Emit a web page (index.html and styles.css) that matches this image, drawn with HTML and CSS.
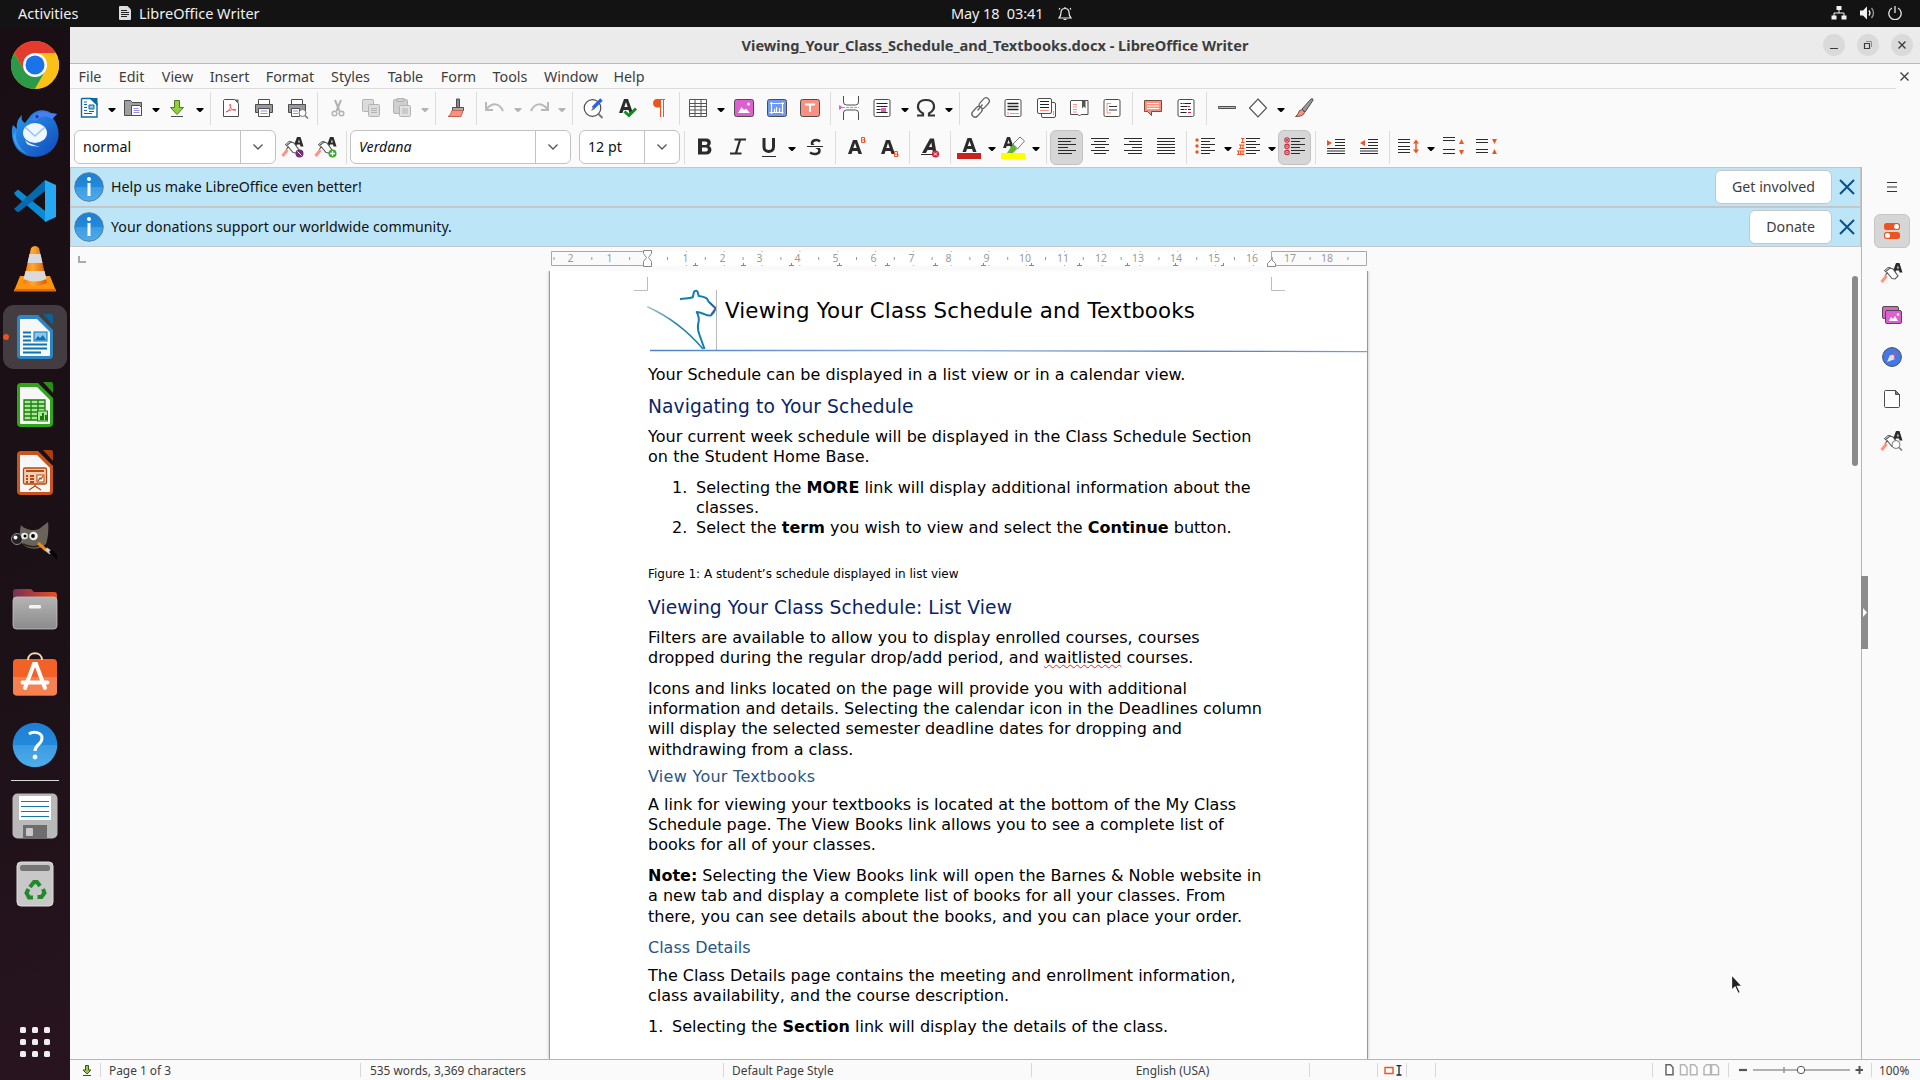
FILE: index.html
```html
<!DOCTYPE html>
<html lang="en">
<head>
<meta charset="utf-8">
<title>Viewing_Your_Class_Schedule_and_Textbooks.docx - LibreOffice Writer</title>
<link rel="stylesheet" href="styles.css">
</head>
<body>
<svg width="0" height="0" class="defs">
  <defs>
    <linearGradient id="gInfo" x1="0" y1="0" x2="0" y2="1"><stop offset="0" stop-color="#1c7fd3"/><stop offset=".5" stop-color="#2389db"/><stop offset=".5" stop-color="#3a9be2"/><stop offset="1" stop-color="#4fadea"/></linearGradient>
    <linearGradient id="gBird" x1="0" y1="0" x2="1" y2="1"><stop offset="0" stop-color="#2a9df4"/><stop offset="1" stop-color="#1148b8"/></linearGradient>
    <linearGradient id="gCone" x1="0" y1="0" x2="1" y2="0"><stop offset="0" stop-color="#f57900"/><stop offset=".4" stop-color="#ffa733"/><stop offset="1" stop-color="#d95b00"/></linearGradient>
    <linearGradient id="gMetal" x1="0" y1="0" x2="0" y2="1"><stop offset="0" stop-color="#b4b4b4"/><stop offset="1" stop-color="#8b8b8b"/></linearGradient>
    <linearGradient id="gFold" x1="0" y1="0" x2="1" y2="0"><stop offset="0" stop-color="#77305a"/><stop offset="1" stop-color="#e9501f"/></linearGradient>
    <linearGradient id="gRule" gradientUnits="userSpaceOnUse" x1="100" y1="0" x2="818" y2="0"><stop offset="0" stop-color="#4f83c4"/><stop offset=".42" stop-color="#8fb0dc"/><stop offset=".75" stop-color="#4a7ab5"/><stop offset="1" stop-color="#7a9fd3"/></linearGradient>
    <linearGradient id="gCat" x1="0" y1="0" x2="1" y2="0"><stop offset="0" stop-color="#a9c9d2"/><stop offset=".5" stop-color="#2b86a8"/><stop offset="1" stop-color="#117fb0"/></linearGradient>
    <symbol id="info" viewBox="0 0 30 30"><circle cx="15" cy="15" r="14.3" fill="url(#gInfo)" stroke="#5d7f9c"/><circle cx="15" cy="7" r="2" fill="#fff"/><rect x="13.5" y="11" width="3" height="13" fill="#fff"/></symbol>
    <symbol id="arr" viewBox="0 0 8 6"><path d="M.5 1h7v1L4.500 5h-1L.5 2z"/></symbol>
    <symbol id="chev" viewBox="0 0 12 8"><path d="M1.500 1.500 6 6l4.500-4.500" fill="none" stroke="#555" stroke-width="1.300"/></symbol>
    <symbol id="brushA" viewBox="0 0 24 24"><path d="M12.500 11.500 16 2h3.500l3 9.500h-3l-.5-2h-3l-1 2z" fill="#2b2b2b"/><path d="m17 7.500 1-3 .8 3z" fill="#fafafa"/><path d="m5 11 5-4 3 1 5 7-3 3-3-.500-5-6-2 4" fill="#fff" stroke="#555" stroke-width="1.100"/><path d="m4 10 4-3.500 3 .500" fill="none" stroke="#555"/><path d="m6.500 15-5 6" stroke="#ff9383" stroke-width="3"/></symbol>
    <symbol id="x" viewBox="0 0 16 16"><path d="m1 1 14 14M15 1 1 15" stroke="#0b4f8a" stroke-width="2" fill="none"/></symbol>
    <symbol id="pg" viewBox="0 0 24 24"><rect x="4" y="3.500" width="16" height="17" rx="1.500" fill="#fff" stroke="#4d4d4d"/></symbol>
  </defs>
</svg>

<header class="topbar">
  <span class="act">Activities</span>
  <svg class="appicon" width="12" height="14" viewBox="0 0 12 14"><path d="M1 0h7.500L12 3.500V13a1 1 0 0 1-1 1H1a1 1 0 0 1-1-1V1a1 1 0 0 1 1-1z" fill="#ddd"/><path d="M2 4.500h6M2 6.500h8M2 8.500h8M2 10.500h6" stroke="#222"/></svg>
  <span class="appname">LibreOffice Writer</span>
  <span class="clock">May 18&nbsp; 03:41</span>
  <svg class="bell" width="14" height="15" viewBox="0 0 14 15"><path d="M1 12h12c-1.500-1.500-2-2.500-2-5.500C11 4 9.500 2.500 7 2.500S3 4 3 6.500C3 9.500 2.500 10.500 1 12zM7 1v1.500M5.500 13.500h3M2 2 1 3.500M12 2l1 1.500" fill="none" stroke="#eee" stroke-width="1.200"/></svg>
  <span class="tray">
    <svg width="16" height="14" viewBox="0 0 16 14"><path d="M5.500 0h5v4h-5zM.5 9.500h5v4h-5zM10.500 9.500h5v4h-5z" fill="#f2f2f2"/><path d="M8 4v3M3 10V7h10v3" fill="none" stroke="#f2f2f2"/></svg>
    <svg width="15" height="14" viewBox="0 0 15 14"><path d="M0 4.500h3L7 .5v13L3 9.500H0z" fill="#f2f2f2"/><path d="M9 4.500q2 2.500 0 5" fill="none" stroke="#f2f2f2" stroke-width="1.300"/><path d="M11.500 2q4 5 0 10" fill="none" stroke="#999" stroke-width="1.300"/></svg>
    <svg width="14" height="14" viewBox="0 0 14 14"><path d="M4 2a6.200 6.200 0 1 0 6 0M7 0v7" fill="none" stroke="#e4e4e4" stroke-width="1.300"/></svg>
  </span>
</header>

<div class="desktop">
<nav class="dock">
  <div class="app"><svg width="48" height="48" viewBox="0 0 48 48"><circle cx="24" cy="24" r="24" fill="#fbc116"/><path d="M3.200 12A24 24 0 0 1 44.800 12H24L13.600 30z" fill="#e33b2e"/><path d="M3.200 12A24 24 0 0 0 24 48L34.400 30 13.600 30z" fill="#2a9a49"/><path d="M24 12H44.800A24 24 0 0 1 24 48L34.400 30z" fill="#fbc116"/><circle cx="24" cy="24" r="12" fill="#fff"/><circle cx="24" cy="24" r="9.500" fill="#1a73e8"/></svg></div>
  <div class="app"><svg width="48" height="48" viewBox="0 -1 48 48"><path d="M11 5c-1 4 0 6 3 8l6-8c5-6 15-6 20-2l6 1-4 4c7 9 8 22 0 31-8 9-24 11-34 2C0 33 0 20 2 15l4 4C5 12 8 8 11 5z" fill="url(#gBird)"/><path d="M20 10c3-8 12-10 18-7l8 1-5 5c-5-3-10-4-16 2z" fill="#4b7cf0"/><path d="M5 20c-2 10 4 20 12 24-8-2-14-9-15-18z" fill="#5cc3ff" opacity=".5"/><ellipse cx="24" cy="23" rx="12" ry="10" fill="#eef6ff"/><path d="m14 17 10 9 10-9" fill="none" stroke="#9cc3f0" stroke-width="1.600"/><path d="M14 30c4 4 10 5 15 7-4-1-8 0-13-3z" fill="#dcebff"/><circle cx="26" cy="6.500" r="1.500" fill="#123a8c"/></svg></div>
  <div class="app"><svg width="42" height="42" viewBox="0 0 42 42"><path d="m0 13 4-3.500L32 32v10L2 16z" fill="#0a8ad2"/><path d="M0 29 31 0v11L4 32.500z" fill="#0569ad"/><path d="M31 0v42l11-5V5z" fill="#27a9f2"/><path d="m31 31-7-5.500L31 42z" fill="#0a8ad2"/></svg></div>
  <div class="app"><svg width="42" height="46" viewBox="0 0 42 46"><path d="M6 30h30l6 15H0z" fill="#ff9410"/><path d="M0 43h42v2.500H0z" fill="#e06a00"/><path d="M17 2q4-4 8 0l8 35q-12 6-24 0z" fill="url(#gCone)"/><path d="M15.500 8h11l2 9h-15zM11.500 25h19l2 8q-11.500 5-23 0z" fill="#dadada"/></svg></div>
  <div class="app active"><svg width="38" height="46" viewBox="0 0 38 46"><path d="M5 1h17l15 15v25a4 4 0 0 1-4 4H5a4 4 0 0 1-4-4V5a4 4 0 0 1 4-4z" fill="#2a87c4"/><path d="M4 5h17l13 13v23q0 1-1 1H5q-1 0-1-1z" fill="#f7f7f7"/><path d="M27 0h8q2 0 2 2v9z" fill="#0d6199"/><path d="M7 18.500h8M7 22.500h8M7 26.500h8M7 30.500h24M7 34.500h24M7 38.500h18" stroke="#0b74b8" stroke-width="2"/><rect x="18" y="18" width="13" height="9" fill="#8fc7e8" stroke="#0b74b8"/><path d="m19 26 3-4 2 2 3-3 3 5z" fill="#0b74b8"/></svg></div>
  <div class="app"><svg width="38" height="46" viewBox="0 0 38 46"><path d="M5 1h17l15 15v25a4 4 0 0 1-4 4H5a4 4 0 0 1-4-4V5a4 4 0 0 1 4-4z" fill="#33a31c"/><path d="M4 5h17l13 13v23q0 1-1 1H5q-1 0-1-1z" fill="#f7f7f7"/><path d="M27 0h8q2 0 2 2v9z" fill="#2b8f16"/><path d="M8 18h21v20H8z" fill="#a6e898"/><path d="M8 18h21v20H8zM8 22h21M8 26h21M8 30h21M8 34h21M15 18v20M22 18v20" fill="none" stroke="#1c7d0c" stroke-width="1.300"/><rect x="21.500" y="29" width="10" height="10" fill="#a6e898" stroke="#1c7d0c"/><path d="M24 38v-4h2v4zM26 38v-7h2v7zM29 38v-5h2v5z" fill="#1c7d0c"/></svg></div>
  <div class="app"><svg width="38" height="46" viewBox="0 0 38 46"><path d="M5 1h17l15 15v25a4 4 0 0 1-4 4H5a4 4 0 0 1-4-4V5a4 4 0 0 1 4-4z" fill="#c9551b"/><path d="M4 5h17l13 13v23q0 1-1 1H5q-1 0-1-1z" fill="#f7f7f7"/><path d="M27 0h8q2 0 2 2v9z" fill="#a8400c"/><rect x="7.500" y="18" width="23" height="16" rx="1.500" fill="#f5cdb4" stroke="#b34a12" stroke-width="1.300"/><path d="M10 21h18M14 26h4M14 29h4M14 32h4M10 26h2M10 29h2M10 32h2" stroke="#b34a12" stroke-width="1.800"/><rect x="21" y="25" width="7" height="7" fill="#fff" stroke="#b34a12"/><path d="m22 31 2-3 1 1 2-3M19 34v2l-6 4M19 36l6 4" fill="none" stroke="#b34a12" stroke-width="1.300"/></svg></div>
  <div class="app"><svg width="48" height="40" viewBox="0 0 48 40"><path d="M10 4c4 5 13 6 18 4l9-7c1 6 0 17-2 22-7 7-20 6-25-2-2-5-1-13 0-17z" fill="#69635a"/><path d="M12 23q10 5 17 1" fill="none" stroke="#2b2620" stroke-width="1.500"/><circle cx="6" cy="18" r="5.500" fill="#222" stroke="#8b8b8b"/><circle cx="4.500" cy="16.500" r="2" fill="#fff"/><circle cx="13.500" cy="15" r="3.300" fill="#eee"/><circle cx="22.500" cy="15" r="4.300" fill="#eee"/><circle cx="14" cy="15" r="1.500"/><circle cx="22" cy="15" r="1.900"/><path d="m27 22 8 7" stroke="#e98a1d" stroke-width="3"/><path d="m35 28 5 4" stroke="#cfcfcf" stroke-width="4"/><path d="m38 31 8 8v-5q-4-5-6-5z" fill="#050505"/></svg></div>
  <div class="app"><svg width="46" height="42" viewBox="0 0 46 42"><path d="M1 20V4q0-3 3-3h15l3 3h20q3 0 3 3v13z" fill="url(#gFold)"/><rect x="1" y="9" width="44" height="32" rx="3.500" fill="url(#gMetal)" stroke="#c4c4c4" stroke-width=".8"/><rect x="17" y="17" width="12" height="3.500" rx="1.200" fill="#f4f4f4"/></svg></div>
  <div class="app"><svg class="bag" width="46" height="46" viewBox="0 3 46 46"><rect x="1" y="8" width="44" height="36.500" rx="4" fill="#f26226"/><path d="M1 26h44v14.500q0 4-4 4H5q-4 0-4-4z" fill="#f58150"/><path d="M16 9c0-9 14-9 14 0" fill="none" stroke="#f8d9b0" stroke-width="2"/><path d="m13 37 9-24h2l9 24M10.500 31.500h25" fill="none" stroke="#fff" stroke-width="4" stroke-linecap="round"/></svg></div>
  <div class="app"><svg width="46" height="46" viewBox="0 0 46 46"><circle cx="23" cy="23" r="22.300" fill="url(#gInfo)"/><path d="M17 12c4-3 13-2 13 4 0 7-7 6-7 13" fill="none" stroke="#fff" stroke-width="3"/><circle cx="23" cy="35" r="2.400" fill="#fff"/></svg></div>
  <div class="dsep"></div>
  <div class="app drive"><svg width="46" height="46" viewBox="0 0 46 46"><rect x=".5" y=".5" width="45" height="45" rx="5" fill="#b9b9b9"/><path d="M7 3h32v24H7z" fill="#fff"/><path d="M9 8.500h28M9 13.500h28M9 18.500h28M9 23.500h28" stroke="#157aa5"/><path d="M11 32h24v13.500H11z" fill="#6d6d6d"/><rect x="14" y="35" width="7" height="8" rx="1" fill="#c9c9c9"/></svg></div>
  <div class="app"><svg width="38" height="46" viewBox="0 0 38 46"><rect x="1" y="1" width="36" height="44" rx="4" fill="#c8c8c8" stroke="#dedede"/><rect x="4" y="4" width="30" height="6" rx="2.500" fill="#757575"/><g fill="none" stroke="#1f8a2a" stroke-width="4"><path d="m14 26 4-5h3l3 4M27 28l1.500 4-3 4h-4M17 36.500h-4L10.500 32l2-4"/></g></svg></div>
  <div class="grid"><svg width="31" height="31" viewBox="0 0 31 31" fill="#eee"><rect width="6" height="6" rx="1.500"/><rect x="12" width="6" height="6" rx="1.500"/><rect x="24" width="6" height="6" rx="1.500"/><rect y="12" width="6" height="6" rx="1.500"/><rect x="12" y="12" width="6" height="6" rx="1.500"/><rect x="24" y="12" width="6" height="6" rx="1.500"/><rect y="24" width="6" height="6" rx="1.500"/><rect x="12" y="24" width="6" height="6" rx="1.500"/><rect x="24" y="24" width="6" height="6" rx="1.500"/></svg></div>
</nav>

<main class="window">
  <div class="titlebar">
    <h1>Viewing_Your_Class_Schedule_and_Textbooks.docx - LibreOffice Writer</h1>
    <div class="wbtns">
      <span><svg width="10" height="10"><path d="M1 8.500h8" stroke="#3d3d3d"/></svg></span>
      <span><svg width="10" height="10"><path d="M1.500 3.500h5v5h-5z" fill="none" stroke="#3d3d3d" stroke-width="1.200"/><path d="M3 1.500h5.500V7" fill="none" stroke="#8d8d8d"/></svg></span>
      <span><svg width="10" height="10"><path d="m1.500 1.500 7 7m0-7-7 7" stroke="#3d3d3d" stroke-width="1.400"/></svg></span>
    </div>
  </div>
  <div class="menubar">
    <div class="menus"><span>File</span><span>Edit</span><span>View</span><span>Insert</span><span>Format</span><span>Styles</span><span>Table</span><span>Form</span><span>Tools</span><span>Window</span><span>Help</span></div>
    <svg class="docclose" width="9" height="9"><path d="m.5.5 8 8m0-8-8 8" stroke="#3d3d3d" stroke-width="1.300"/></svg>
  </div>

  <div class="toolbar t1">
    <div class="sp"><svg viewBox="0 0 24 24"><path d="M5.500 2.500H15L20 7.500V21H4.500V3z" fill="#fff" stroke="#0b6aa2" stroke-width="1.400"/><path d="M12 2h8.500v8z" fill="#0b6aa2"/><path d="M7 8.500h3M7 11.500h3M7 14.500h3M7 17.500h8M7 6h3" stroke="#0b6aa2"/><path d="M12 9h5v4h-5z" fill="#8fc7e8" stroke="#0b6aa2"/><path d="M12 15.500h5" stroke="#0b6aa2"/></svg><svg class="a"><use href="#arr"/></svg></div>
    <div class="sp"><svg viewBox="0 0 24 24"><path d="M3.500 19.500v-15h6l2 2h9v13z" fill="#a0a0a0" stroke="#4d4d4d"/><path d="M10.500 9.500h8l2 2v8h-10z" fill="#fff" stroke="#4d4d4d"/><path d="M12.500 12.500h5M12.500 14.500h6M12.500 16.500h6" stroke="#9a8fe0"/></svg><svg class="a"><use href="#arr"/></svg></div>
    <div class="sp"><svg viewBox="0 0 24 24"><path d="M9.500 4.500h5v7h4L12 18.500 5.500 11.500h4z" fill="#92cf3d" stroke="#4f7a22"/><path d="M6 20.500h12" stroke="#4d4d4d"/></svg><svg class="a"><use href="#arr"/></svg></div>
    <i></i>
    <div><svg viewBox="0 0 24 24"><path d="M5.500 3.500h10l4 4v13h-15v-16z" fill="#fff" stroke="#4d4d4d"/><path d="M15 3.500h4.500V8z" fill="#666"/><path d="M7 16c6-3 5-8 4-8s1 8 6 6c-2-2-7 1-10 2z" fill="none" stroke="#e05a6b"/></svg></div>
    <div><svg viewBox="0 0 24 24"><path d="M6.500 9V3.500h11V9" fill="#fff" stroke="#4d4d4d"/><path d="M3.500 8.500h17v8h-17z" fill="#999" stroke="#4d4d4d"/><path d="M6.500 12.500h11v8h-11z" fill="#fff" stroke="#4d4d4d"/><path d="M8.500 15h7M8.500 17.500h7" stroke="#9a8fe0"/></svg></div>
    <div><svg viewBox="0 0 24 24"><path d="M6.500 9V3.500h11V9" fill="#fff" stroke="#4d4d4d"/><path d="M3.500 8.500h17v8h-17z" fill="#999" stroke="#4d4d4d"/><path d="M6.500 12.500h8v8h-8z" fill="#fff" stroke="#4d4d4d"/><path d="M8 15h5M8 17.500h5" stroke="#9a8fe0"/><circle cx="17.500" cy="17" r="3.500" fill="#fff" stroke="#777"/><path d="m20 19.500 3 3" stroke="#777" stroke-width="1.600"/></svg></div>
    <i></i>
    <div><svg viewBox="0 0 24 24" fill="none" stroke="#b3b3b3" stroke-width="1.500"><path d="m9 4 4.500 11M15 4l-4.500 11" stroke-width="2"/><circle cx="8.500" cy="17.500" r="2.300"/><circle cx="15.500" cy="17.500" r="2.300"/></svg></div>
    <div><svg viewBox="0 0 24 24" fill="#dcdcdc" stroke="#b3b3b3"><rect x="3.500" y="3.500" width="11" height="12" rx="1"/><rect x="9.500" y="8.500" width="11" height="12" rx="1"/><path d="M12 12.500h6M12 14.500h6M12 16.500h6"/></svg></div>
    <div class="sp"><svg viewBox="0 0 24 24" fill="#d0d0d0" stroke="#b3b3b3"><rect x="3.500" y="3.500" width="14" height="14" rx="1.500"/><path d="M7 2.500h7v3H7z"/><rect x="9.500" y="9.500" width="11" height="11" rx="1" fill="#e2e2e2"/><path d="M12 13h6M12 15h6M12 17h6"/></svg><svg class="a dim"><use href="#arr"/></svg></div>
    <i></i>
    <div><svg viewBox="0 0 24 24"><path d="M12.500 3h3v9h-3z" fill="#888" stroke="#4d4d4d"/><path d="M8.500 11.500h11v3h-11z" fill="#aaa" stroke="#4d4d4d"/><path d="M8 14.500h11l-2 6H4q3-1 4-6z" fill="#fa9080" stroke="#c4604f"/></svg></div>
    <i></i>
    <div class="sp"><svg viewBox="0 0 24 24" fill="none" stroke="#b9b9b9" stroke-width="2"><path d="M3 6v8h7M3.500 13C9 7 16 6 20 15"/></svg><svg class="a dim"><use href="#arr"/></svg></div>
    <div class="sp"><svg viewBox="0 0 24 24" fill="none" stroke="#b9b9b9" stroke-width="2"><path d="M21 6v8h-7M20.500 13C15 7 8 6 4 15"/></svg><svg class="a dim"><use href="#arr"/></svg></div>
    <i></i>
    <div><svg viewBox="0 0 24 24"><circle cx="11.500" cy="12" r="8.300" fill="#fff" stroke="#4d4d4d" stroke-width="1.200"/><path d="m17.500 18 4 4" stroke="#777" stroke-width="2"/><path d="m12 12 8.500-8.500" stroke="#2e63d8" stroke-width="3.300"/><path d="m10 15 2-4 2 2z" fill="#7a7a7a"/></svg></div>
    <div><svg viewBox="-1 0 24 24"><path fill-rule="evenodd" d="m4 17 5-14h4l5 14h-3.500l-1-3h-5l-1 3zm5.300-6h3.400L11 6z" fill="#2b2b2b"/><path d="m9.500 15.500 4.500 4 7-7" fill="none" stroke="#118a24" stroke-width="3"/></svg></div>
    <div><svg viewBox="2 0 24 24"><path d="M12 3h8v1h-1v17h-1V4h-2v17h-1v-9.500h-3C9.500 11.500 8 9.500 8 7.300S9.500 3 12 3z" fill="#ec5422"/></svg></div>
    <i></i>
    <div class="sp"><svg viewBox="0 0 24 24"><path d="M3.500 3.500h17v17h-17z" fill="#fff"/><path d="M3.500 3.500h17v17h-17zM3.500 7.500h17M3.500 10.500h17M3.500 14h17M3.500 17.500h17M9 3.500v17M15 3.500v17" fill="none" stroke="#555"/></svg><svg class="a"><use href="#arr"/></svg></div>
    <div><svg viewBox="0 0 24 24"><rect x="2.500" y="3.500" width="19" height="17" rx="2" fill="#dd60cf" stroke="#4d4d4d"/><path d="m6 17 3.500-6 2.500 3 2-1.500L18 17z" fill="#fff"/><circle cx="16.500" cy="8" r="1.500" fill="#fff"/></svg></div>
    <div><svg viewBox="0 0 24 24"><rect x="2.500" y="3.500" width="19" height="17" rx="2" fill="#7099f0" stroke="#4d4d4d"/><path d="M5 7.500h14M6.500 6v12M4.500 16.500h14M17.500 6v12M9.500 16v-3M11.500 16v-5M14.500 16v-4" stroke="#fff" stroke-width="1.200"/></svg></div>
    <div><svg viewBox="0 0 24 24"><rect x="2.500" y="3.500" width="19" height="17" rx="2" fill="#fa9080" stroke="#4d4d4d"/><path d="M7 8.500h10M12 8v8" stroke="#fff" stroke-width="2"/></svg></div>
    <i></i>
    <div><svg viewBox="0 0 24 24"><path d="M4.500 0v6q0 3 3 3h9q3 0 3-3V0M4.500 24v-7q0-3 3-3h9q3 0 3 3v7" fill="#fff" stroke="#4d4d4d"/><path d="M3 11.500h17" stroke="#e57bd9" stroke-dasharray="3 1"/><path d="m0 9 4 2.500L0 14z" fill="#dd60cf"/></svg></div>
    <div class="sp"><svg viewBox="0 0 24 24"><use href="#pg"/><path d="M6.500 7.500h11M6.500 10.500h11M6.500 13.500h4M6.500 16.500h11" stroke="#222"/><path d="M11 12h5v4h-5z" fill="#dd60cf"/></svg><svg class="a"><use href="#arr"/></svg></div>
    <div class="sp"><svg viewBox="0 0 24 24"><path d="M3 19.500h6v-2C1 13 3 4 12 4s11 9 3 13.500v2h6" fill="none" stroke="#333" stroke-width="2.200"/></svg><svg class="a"><use href="#arr"/></svg></div>
    <i></i>
    <div><svg viewBox="0 0 24 24" fill="#fff" stroke="#666" stroke-width="1.300"><rect x="10" y="4" width="12" height="6.500" rx="3.200" transform="rotate(-48 16 7)"/><rect x="3" y="13" width="12" height="6.500" rx="3.200" transform="rotate(-48 8.500 16)"/><path d="m9.500 14.500 5-6"/></svg></div>
    <div><svg viewBox="0 0 24 24"><use href="#pg"/><path d="M6.500 7.500h11M6.500 10.500h11M6.500 13.500h11" stroke="#222" stroke-width="1.300"/><path d="M7 16v3M9 17.500h9" stroke="#fa9080"/></svg></div>
    <div><svg viewBox="0 0 24 24"><rect x="7.500" y="6.500" width="14" height="15" rx="1.500" fill="#fff" stroke="#4d4d4d"/><rect x="3.500" y="2.500" width="14" height="15" rx="1.500" fill="#fff" stroke="#4d4d4d"/><path d="M6 5.500h9M6 8.500h9M6 11.500h9" stroke="#222" stroke-width="1.200"/><path d="M6 14.500h9M19.500 15v4" stroke="#fa9080"/></svg></div>
    <div><svg viewBox="0 0 24 24"><path d="M4 4.500h17v14h-7l-1.500 1.500L11 18.500H3.500V5z" fill="#fff" stroke="#4d4d4d"/><path d="M15 4.500h3.500v8l-1.700-2-1.800 2z" fill="#555"/><path d="M6 8.500h4M6 11h4M6 13.500h4M6 16h4" stroke="#fa9080"/></svg></div>
    <div><svg viewBox="0 0 24 24"><use href="#pg"/><path d="M7 7.500h4M7 7v10M7 17h4" stroke="#fa9080" fill="none"/><path d="M9 10.500h8M9 14h8" stroke="#333"/></svg></div>
    <i></i>
    <div><svg viewBox="0 0 24 24"><path d="M3.500 4.500h17v11h-10v4l-4-4h-3z" fill="#fa9080" stroke="#7a4a40"/><path d="M6 7.500h12M6 10h12M6 12.500h12" stroke="#fff"/></svg></div>
    <div><svg viewBox="0 0 24 24"><use href="#pg"/><path d="M6.500 7.500h2M10 7.500h7M6.500 10.500h7M6.500 13.500h4M14 13.500h3M6.500 16.500h6" stroke="#222"/><path d="M9 7.500h2M14 10.500h2M11 13.500h2M14 16.500h3" stroke="#d0243c"/></svg></div>
    <i></i>
    <div><svg viewBox="0 0 24 24"><path d="M3.500 10.500h17v2h-17z" fill="#bbb" stroke="#4d4d4d"/></svg></div>
    <div class="sp"><svg viewBox="0 0 24 24"><path d="m12 3 8.500 9-8.500 9L3.500 12z" fill="#fff" stroke="#555" stroke-width="1.200"/></svg><svg class="a"><use href="#arr"/></svg></div>
    <div><svg viewBox="0 0 24 24"><path d="m10 13 9-10q3-1 1.500 2L13 16z" fill="#999" stroke="#4d4d4d"/><path d="M3.500 20.500q3-2 4-6l3-1 2 3q-1 4-9 4z" fill="#fa9080" stroke="#7a4a40"/></svg></div>
  </div>

  <div class="toolbar t2">
    <div class="combo c1"><span>normal</span><b><svg width="12" height="8"><use href="#chev"/></svg></b></div>
    <div class="fx"><svg viewBox="0 0 24 24"><use href="#brushA"/><circle cx="18.500" cy="18.500" r="4" fill="#7b2a7d"/><path d="m16.500 16.500 4 4" stroke="#fff"/></svg></div>
    <div class="fx"><svg viewBox="0 0 24 24"><use href="#brushA"/><circle cx="18.500" cy="18.500" r="4" fill="#3fa52a"/><path d="M16 18.500h5M18.500 16v5" stroke="#fff" stroke-width="1.300"/></svg></div>
    <i></i>
    <div class="combo c2"><span><em>Verdana</em></span><b><svg width="12" height="8"><use href="#chev"/></svg></b></div>
    <div class="combo c3"><span>12 pt</span><b><svg width="12" height="8"><use href="#chev"/></svg></b></div>
    <i></i>
    <div><svg viewBox="0 0 24 24"><path fill-rule="evenodd" d="M5 3.500h8.500c5 0 5.500 6 2.500 7.500 4 1.500 3 8.500-2.500 8.500H5zm4 3v3.500h3.500c2.500 0 2.500-3.500 0-3.500zm0 6v4h4c2.500 0 2.500-4 0-4z" fill="#2b2b2b"/></svg></div>
    <div><svg viewBox="0 0 24 24"><path d="M8.500 4.500H20M4 18.500h11.500M14 5l-4 13" stroke="#2b2b2b" stroke-width="2.200"/></svg></div>
    <div class="sp"><svg viewBox="0 0 24 24"><path d="M7 3v9c0 6 9.500 6 9.500 0V3" fill="none" stroke="#2b2b2b" stroke-width="3"/><path d="M5 21.500h14" stroke="#2b2b2b"/></svg><svg class="a"><use href="#arr"/></svg></div>
    <div><svg viewBox="0 0 24 24"><path d="M17 6.500c-3-2.500-8-1.500-8 2 0 4 7.500 2.500 7.500 7 0 4-6 4.500-9.500 2" fill="none" stroke="#2b2b2b" stroke-width="2.500"/><path d="M4 11.500h16" stroke="#fafafa" stroke-width="3"/><path d="M4 11.500h16" stroke="#2b2b2b"/></svg></div>
    <i></i>
    <div><svg viewBox="0 0 24 24"><path fill-rule="evenodd" d="M4 19 9 5h4l5 14h-3.500l-1-3h-5l-1 3zm5.300-6h3.400L11 8z" fill="#2b2b2b"/><path d="M17.500 2.500h3v5h-3zM17.500 5h3.500v2.500" fill="none" stroke="#ec5422"/></svg></div>
    <div><svg viewBox="0 0 24 24"><path fill-rule="evenodd" d="M4 19 9 5h4l5 14h-3.500l-1-3h-5l-1 3zm5.300-6h3.400L11 8z" fill="#2b2b2b"/><path d="M17.500 16.500h3v5h-3zM17.500 19h3.500v2.500" fill="none" stroke="#ec5422"/></svg></div>
    <i></i>
    <div><svg viewBox="0 0 24 24"><path fill-rule="evenodd" d="m4 18 8-14.500h4L18.500 18H15l-.5-3h-5L8 18zm7-6h3l-.6-4.500z" fill="#2b2b2b"/><path d="M3 19.500h12" stroke="#2b2b2b"/><circle cx="17.500" cy="19" r="3.600" fill="#d0243c"/><path d="m16 17.500 3 3m0-3-3 3" stroke="#fff"/></svg></div>
    <i></i>
    <div class="sp"><svg viewBox="0 0 24 24"><path fill-rule="evenodd" d="m5.500 17 5-14h4l5 14H16l-1-3h-5l-1 3zm5.300-6h3.400l-1.700-5z" fill="#2b2b2b"/><path d="M0 18h24v6H0z" fill="#c9211e"/></svg><svg class="a"><use href="#arr"/></svg></div>
    <div class="sp"><svg viewBox="0 0 24 24"><path fill-rule="evenodd" d="M2 13 6 2h3l4 11h-3l-.700-2H5.700L5 13zm4.300-4.500h2.500L7.500 5z" fill="#2b2b2b"/><path d="m12 9 7-7 4.500 4-7 8z" fill="#fff" stroke="#777"/><path d="m12 9 4 5-4 4H6z" fill="#5fb62c"/><path d="M0 18h24v6H0z" fill="#ffff00"/></svg><svg class="a"><use href="#arr"/></svg></div>
    <i></i>
    <div class="on"><svg viewBox="0 0 24 24" class="ln"><path d="M3 3.500h18M3 6.500h13M3 9.500h18M3 12.500h10M3 15.500h18M3 18.500h14"/></svg></div>
    <div><svg viewBox="0 0 24 24" class="ln"><path d="M3 3.500h18M6 6.500h12M3 9.500h18M7 12.500h10M3 15.500h18M6 18.500h12"/></svg></div>
    <div><svg viewBox="0 0 24 24" class="ln"><path d="M3 3.500h18M8 6.500h13M3 9.500h18M11 12.500h10M3 15.500h18M7 18.500h14"/></svg></div>
    <div><svg viewBox="0 0 24 24" class="ln"><path d="M3 3.500h18M3 6.500h18M3 9.500h18M3 12.500h18M3 15.500h18M3 18.500h18"/></svg></div>
    <i></i>
    <div class="sp"><svg viewBox="0 0 24 24" class="ln"><path d="M8 3.500h14M8 6.500h9M8 9.500h14M8 12.500h9M8 15.500h14M8 18.500h9"/><g fill="#ec5422" stroke="none"><circle cx="4" cy="5" r="1.700"/><circle cx="4" cy="11" r="1.700"/><circle cx="4" cy="17" r="1.700"/></g></svg><svg class="a"><use href="#arr"/></svg></div>
    <div class="sp"><svg viewBox="0 0 24 24" class="ln"><path d="M9 3.500h14M9 6.500h10M9 9.500h14M9 12.500h10M9 15.500h14M9 18.500h10"/><path d="M4 3.500h3.500M5.700 3.500v4M4 7.500h3.500M2 10h5.500M3.700 10v3M6 10v3M2 13.500h5.500M0 16h7.500M1.500 16v3M3.700 16v3M6 16v3M0 19.500h7.500" stroke="#ec5422"/></svg><svg class="a"><use href="#arr"/></svg></div>
    <div class="on"><svg viewBox="0 0 24 24" class="ln"><path d="M8 3.500h14M8 6.500h9M8 9.500h14M8 12.500h9M8 15.500h14M8 18.500h9"/><g fill="none" stroke="#d0243c"><circle cx="4" cy="5" r="2.200"/><circle cx="4" cy="11.300" r="2.200"/><circle cx="4" cy="17.600" r="2.200"/><path d="m3 4 2 2M5 4 3 6M3 10.300l2 2m0-2-2 2M3 16.600l2 2m0-2-2 2" stroke-width=".8"/></g></svg></div>
    <i></i>
    <div><svg viewBox="0 0 24 24" class="ln"><path d="M11 4.500h10M11 7.500h10M11 10.500h10M3 13.500h18M3 16h18M3 18.500h18"/><path d="m3 5 5 3-5 3z" fill="#ec5422" stroke="none"/></svg></div>
    <div><svg viewBox="0 0 24 24" class="ln"><path d="M11 4.500h10M11 7.500h10M11 10.500h10M3 13.500h18M3 16h18M3 18.500h18"/><path d="M8 5 3 8l5 3z" fill="#ec5422" stroke="none"/></svg></div>
    <i></i>
    <div class="sp"><svg viewBox="0 0 24 24" class="ln"><path d="M2 4.500h12M2 7.500h12M2 11.500h12M2 14.500h12M2 17.500h12"/><path d="M20 7v9" stroke="#ec5422" stroke-width="1.500"/><path d="m20 4.500 3 4h-6zM20 18.500l3-4h-6z" fill="#ec5422" stroke="none"/></svg><svg class="a"><use href="#arr"/></svg></div>
    <div><svg viewBox="0 0 24 24" class="ln"><path d="M1 2.500h12M1 5.500h12M1 14.500h12M1 18.500h12"/><path d="m19.500 4 2.500 5h-5zM19.500 20l2.500-5h-5z" fill="#ec5422" stroke="none"/></svg></div>
    <div><svg viewBox="0 0 24 24" class="ln"><path d="M1 4.500h12M1 7.500h12M1 14.500h12M1 17.500h12"/><path d="m19.500 9 2.500-5h-5zM19.500 14l2.500 5h-5z" fill="#ec5422" stroke="none"/></svg></div>
  </div>

  <div class="work">
    <section class="left">
      <div class="info"><svg width="30" height="30"><use href="#info"/></svg><span>Help us make LibreOffice even better!</span><button>Get involved</button><svg width="16" height="16"><use href="#x"/></svg></div>
      <div class="info second"><svg width="30" height="30"><use href="#info"/></svg><span>Your donations support our worldwide community.</span><button>Donate</button><svg width="16" height="16"><use href="#x"/></svg></div>
      <div class="rulerrow">
        <svg class="corner" width="8" height="7"><path d="M1 0v6h7" fill="none" stroke="#aaa" stroke-width="2"/></svg>
        <svg class="ruler" width="818" height="24" viewBox="0 0 818 24">
          <path d="M98 4h623v15H98z" fill="#fff"/>
          <path d="M97 4.500H.5v14H97M720.500 4.500h95v14h-95z" fill="none" stroke="#a8a8a8"/>
          <path d="M2.500 11.500h95" stroke="#999" stroke-width="3" stroke-dasharray="1 36.800"/>
          <path d="M116 11.500h700" stroke="#999" stroke-width="3" stroke-dasharray="1 36.800"/>
          <path d="M135 4.500h590M135 18.500h590" stroke="#aaa" stroke-dasharray="1 36.800"/>
          <path d="M144.500 16v3m48-3v3m48-3v3m48-3v3m48-3v3m48-3v3m48-3v3m48-3v3m48-3v3m48-3v3m48-3v3m48-3v3" stroke="#888"/>
          <path d="M142 18.500h530" stroke="#888" stroke-dasharray="5 43"/>
          <path d="M92.500 3.500h8v3l-3 4 3 4v5h-8v-5l3-4-3-4z" fill="#fff" stroke="#888"/>
          <path d="M716.500 19.500v-3l4-4 4 4v3z" fill="#fff" stroke="#888"/>
          <g class="nums"><text x="19.500" y="15">2</text><text x="58.500" y="15">1</text><text x="134.500" y="15">1</text><text x="171.500" y="15">2</text><text x="208.500" y="15">3</text><text x="246.500" y="15">4</text><text x="284.500" y="15">5</text><text x="322.500" y="15">6</text><text x="360.500" y="15">7</text><text x="397.500" y="15">8</text><text x="435.500" y="15">9</text><text x="474" y="15">10</text><text x="512" y="15">11</text><text x="550" y="15">12</text><text x="587" y="15">13</text><text x="625" y="15">14</text><text x="663" y="15">15</text><text x="701" y="15">16</text><text x="739" y="15">17</text><text x="776" y="15">18</text></g>
        </svg>
      </div>
      <div class="canvas">
        <article class="page">
          <div class="phead">
            <svg class="logo" width="818" height="82" viewBox="0 0 818 82">
              <path d="M84 19.500h13.500V6M721.500 6v13.500H735" fill="none" stroke="#bdbdbd"/>
              <path d="M97.300 35.700C118 45 137 59 153 78" fill="none" stroke="url(#gCat)" stroke-width="1.500"/>
              <path d="M130 28.300c4-1 9-.5 12.700-2 .8-2 .5-5 2-6.200 3-1.500 3.300 2 4 5 3 .4 6 1 8 2.200 1 1.500 1.500 3 2.500 4l6.500 6-2 4-2.700 3c-3 .7-5-.5-7-1.300-2.500-1-5.500-2-7.300-2 2 4 2.500 6 2 9-1 5-1.500 8 1 14.500l4.800 13.500" fill="none" stroke="#137dad" stroke-width="2" stroke-linejoin="round"/>
              <path d="m159.500 31.300 6.200 6-4.700 6.500" fill="none" stroke="#46609f" stroke-width="1.700"/>
              <path d="M166.500 19v60" stroke="#b8b8b8"/>
              <path d="M100 79.500h260l458 1.200" fill="none" stroke="url(#gRule)" stroke-width="1.300"/>
            </svg>
            <h2>Viewing Your Class Schedule and Textbooks</h2>
          </div>
          <p class="m1 wide">Your Schedule can be displayed in a list view or in a calendar view.</p>
          <h3 class="m2">Navigating to Your Schedule</h3>
          <p class="m3 wide">Your current week schedule will be displayed in the Class Schedule Section<br>on the Student Home Base.</p>
          <ol class="m4">
            <li><span>1.</span><div>Selecting the <strong>MORE</strong> link will display additional information about the<br>classes.</div></li>
            <li><span>2.</span><div>Select the <strong>term</strong> you wish to view and select the <strong>Continue</strong> button.</div></li>
          </ol>
          <p class="caption">Figure 1: A student’s schedule displayed in list view</p>
          <h3 class="m5">Viewing Your Class Schedule: List View</h3>
          <p class="m6 filters">Filters are available to allow you to display enrolled courses, courses<br>dropped during the regular drop/add period, and <u>waitlisted</u> courses.</p>
          <p class="m7">Icons and links located on the page will provide you with additional<br>information and details. Selecting the calendar icon in the Deadlines column<br>will display the selected semester deadline dates for dropping and<br>withdrawing from a class.</p>
          <h4 class="m8">View Your Textbooks</h4>
          <p class="m9">A link for viewing your textbooks is located at the bottom of the My Class<br>Schedule page. The View Books link allows you to see a complete list of<br>books for all of your classes.</p>
          <p class="m4"><strong>Note:</strong> Selecting the View Books link will open the Barnes &amp; Noble website in<br>a new tab and display a complete list of books for all your classes. From<br><span class="wide">there, you can see details about the books, and you can place your order.</span></p>
          <h4 class="m7">Class Details</h4>
          <p class="m6">The Class Details page contains the meeting and enrollment information,<br>class availability, and the course description.</p>
          <ol class="m4 flat"><li><span>1.</span><div>Selecting the <strong>Section</strong> link will display the details of the class.</div></li></ol>
        </article>
        <div class="scroll"></div>
      </div>
    </section>
    <aside class="deck">
      <div class="handle"><svg width="7" height="73"><path d="m2 32 4 4.500L2 41z" fill="#fff"/></svg></div>
      <div class="tab menu"><svg width="10" height="10"><path d="M0 .5h10M0 5h10M0 9.500h10" stroke="#333"/></svg></div>
      <div class="tab sel"><svg width="16" height="16" viewBox="0 0 16 16"><rect width="16" height="7" rx="2.500" fill="#ec5422"/><rect y="9" width="16" height="7" rx="2.500" fill="#ec5422"/><circle cx="12.500" cy="3.500" r="2.500" fill="#fff"/><circle cx="3.500" cy="12.500" r="2.500" fill="#fff"/></svg></div>
      <div class="tab"><svg width="24" height="24"><use href="#brushA"/></svg></div>
      <div class="tab"><svg width="24" height="24" viewBox="0 0 24 24"><rect x="2.500" y="3.500" width="16" height="12" rx="1.500" fill="#dd60cf" stroke="#4d4d4d"/><rect x="5.500" y="7.500" width="16" height="13" rx="1.500" fill="#dd60cf" stroke="#4d4d4d"/><path d="m9 18 2-4 2 2 2-3 3 5z" fill="#fff"/><circle cx="18" cy="11.500" r="1.200" fill="#fff"/></svg></div>
      <div class="tab"><svg width="24" height="24" viewBox="0 0 24 24"><circle cx="12" cy="12" r="9.400" fill="#4478ea" stroke="#4d4d4d"/><path d="m7 17 3-7 5 4z" fill="#e8e8f0"/><path d="m17 7-7 3.500L13.500 14z" fill="#d95468"/><circle cx="12" cy="12" r="2.300" fill="#dcdce6"/></svg></div>
      <div class="tab"><svg width="24" height="24" viewBox="0 0 24 24"><path d="M5.500 3.500h10l4 4v12q0 1-1 1h-13q-1 0-1-1v-15q0-1 1-1z" fill="#fff" stroke="#4d4d4d"/><path d="M15.500 3.500v4h4z" fill="#777" stroke="#4d4d4d"/></svg></div>
      <div class="tab"><svg width="24" height="24" viewBox="0 0 24 24"><use href="#brushA"/><circle cx="16" cy="15.500" r="4" fill="#fff" stroke="#777"/><path d="m19 18.500 3 3" stroke="#777" stroke-width="1.600"/></svg></div>
    </aside>
  </div>

  <footer class="status">
    <span class="ctr save"><svg width="10" height="11" viewBox="0 0 10 11"><path d="M3.500.5h3V5H9L5 9 1 5h2.500z" fill="#92cf3d" stroke="#444"/><path d="M1 10.500h8" stroke="#444"/></svg></span>
    <span>Page 1 of 3</span>
    <span class="words">535 words, 3,369 characters</span>
    <span>Default Page Style</span>
    <span class="ctr lang">English (USA)</span>
    <span></span>
    <span class="ctr nudge"><svg width="19" height="11" viewBox="0 0 19 11"><path d="M1 2.500h8v6H1z" fill="none" stroke="#ec5422" stroke-width="1.400"/><path d="M12.500.5h5M15 .5v9M12.500 10h5" stroke="#222" stroke-width="1.300"/></svg></span>
    <span></span>
    <span></span>
    <span class="ctr nudge"><svg width="55" height="12" viewBox="0 0 55 12" fill="#fff" stroke-width="1.500"><path d="M1 .8h4.500L8 3.500v7.200H1z" stroke="#666"/><path d="M15.500.8h4L22 3.500v7.200h-6.500zM25.500.8h4L32 3.500v7.200h-6.500zM45.500 10.700h-6.500V3.500L41.500.8h4zM46.500.8h4.500L53.500 3.500v7.200h-7z" stroke="#b5b5b5"/></svg></span>
    <span class="ctr"><svg width="126" height="12" viewBox="0 0 126 12"><path d="M2 6h8" stroke="#555" stroke-width="2.200"/><path d="M16 6h97" stroke="#999" stroke-width="1.600"/><path d="M47 3v6" stroke="#999" stroke-width="1.600"/><circle cx="64" cy="6" r="3.700" fill="#fff" stroke="#555"/><path d="M119.500 6h8M123.500 2v8" transform="translate(-1 0)" stroke="#555" stroke-width="2"/></svg></span>
    <span class="zoom">100%</span>
  </footer>
</main>
</div>
<svg class="cursor" width="14" height="22" viewBox="0 0 14 22"><path d="M1.500 1.500v16l3.500-3.500 3 6.500 2.500-1-3-6h5z" fill="#222" stroke="#fff" stroke-width="1.300"/></svg>
</body>
</html>
```
FILE: styles.css
```css
* { box-sizing: border-box; }
body { margin: 0; width: 1920px; height: 1080px; overflow: hidden; background: #fafafa; font: 14.2px/20px "Noto Sans", "Open Sans", sans-serif; color: #3d3d3d; display: flex; flex-direction: column; white-space: nowrap; }
svg { display: block; flex: none; }
.defs { position: absolute; }
h1, h2, h3, h4, p, ol { margin: 0; padding: 0; font-weight: normal; }

.topbar { height: 27px; flex: none; background: #131313; color: #f0f0f0; display: flex; align-items: center; font-size: 14.5px; padding-bottom: 1px; }
.topbar > span:not(.tray) { padding-bottom: 1px; }
.act { width: 101px; padding-left: 18px; }
.appicon { margin-left: 18px; }
.appname { margin-left: 8px; width: 812px; }
.clock { width: 90px; letter-spacing: -.1px; }
.bell { margin-left: 17px; }
.tray { margin-left: auto; padding-right: 18px; display: flex; gap: 13px; }

.desktop { display: flex; flex: 1; min-height: 0; }
.dock { width: 70px; flex: none; background: linear-gradient(160deg, #190e14 0%, #1c1117 60%, #28141f 100%); display: flex; flex-direction: column; align-items: center; padding-top: 4px; }
.app { width: 64px; height: 68px; display: flex; align-items: center; justify-content: center; }
.app.active { position: relative; height: 64px; margin: 2px 0; background: #433c40; border-radius: 11px; }
.app.active::before { content: ""; position: absolute; left: 0; top: 29px; width: 6px; height: 6px; border-radius: 3px; background: #e95420; }
.bag { overflow: visible; }
.dsep { width: 48px; height: 1px; margin-top: 1px; background: #d8d8d8; }
.drive { margin-top: 1px; }
.grid { margin-top: auto; margin-bottom: 22px; }

.window { flex: 1; min-width: 0; display: flex; flex-direction: column; background: #fafafa; }
.titlebar { position: relative; height: 37px; flex: none; background: #ebebeb; border-bottom: 1px solid #b8b8b8; display: flex; align-items: center; justify-content: center; }
.titlebar h1 { font-size: 14.6px; font-weight: bold; color: #3d3d3d; }
.wbtns { position: absolute; right: 7px; top: 7px; display: flex; gap: 12px; }
.wbtns span { width: 22px; height: 22px; border-radius: 11px; background: #dadada; display: flex; align-items: center; justify-content: center; }
.menubar { height: 25px; flex: none; display: flex; }
.menus { width: 1826px; display: grid; grid-template-columns: 40px 43px 49px 55px 66px 55px 55px 51px 52px 70px 46px; text-align: center; border-bottom: 1px solid #dcdcdc; line-height: 26px; font-size: 14.3px; }
.docclose { margin: 8px 0 0 4px; }

.toolbar { display: flex; flex: none; align-items: center; padding-left: 4px; }
.toolbar > div { width: 33px; height: 34px; display: flex; align-items: center; justify-content: center; }
.toolbar > div > svg { width: 24px; height: 24px; }
.toolbar > div.sp { width: 44px; justify-content: flex-start; padding-left: 3px; }
.toolbar .sp svg.a { width: 8px; height: 6px; margin: 3px 0 0 7px; }
.toolbar svg.dim { fill: #b3b3b3; }
.toolbar > i { width: 8px; height: 33px; background: linear-gradient(#dcdcdc, #dcdcdc) 4px 0 / 1px 100% no-repeat; }
.toolbar > div.on { background: #d6d6d6; border: 1px solid #c2c2c2; border-radius: 6px; height: 35px; }
.t1 { height: 38px; }
.t2 { height: 40px; }
.ln { fill: none; stroke: #2b2b2b; stroke-width: 1.1; }
.toolbar > .combo { height: 34px; border: 1px solid #c2c2c2; border-radius: 6px; background: #fff; color: #111; align-items: stretch; justify-content: flex-start; font-size: 14.2px; line-height: 31px; }
.combo span { flex: 1; padding-left: 8px; }
.combo b { width: 35px; border-left: 1px solid #c2c2c2; display: flex; align-items: center; justify-content: center; }
.toolbar > .c1 { width: 202px; }
.toolbar > .c2 { width: 221px; margin-right: 8px; }
.toolbar > .c3 { width: 101px; }

.work { flex: 1; display: flex; min-height: 0; }
.left { width: 1791px; display: flex; flex-direction: column; }
.info { height: 40px; flex: none; background: #bce5f7; border: 1px solid #c6c6c6; color: #111; display: flex; align-items: center; padding: 0 5px 0 3px; font-size: 14.2px; }
.info span { margin-left: 7px; flex: 1; }
.info button { font: inherit; color: #3d3d3d; height: 34px; padding: 0 16px; border: 1px solid #c6c6c6; border-radius: 6px; background: #fff; margin-right: 7px; }
.second span { letter-spacing: .02px; }
.rulerrow { height: 24px; flex: none; display: flex; }
.corner { margin: 9px 0 0 8px; }
.ruler { margin-left: 465px; }
.nums text { font: 10.5px "Noto Sans", sans-serif; fill: #9a9a9a; text-anchor: middle; }
.canvas { flex: 1; min-height: 0; overflow: hidden; display: flex; position: relative; }
.page { width: 819px; margin-left: 479px; background: #fff; border: solid #999; border-width: 0 1px; box-shadow: 0 0 3px rgba(0,0,0,.25); padding-left: 98px; display: flex; flex-direction: column; font: 16px/20.2px "DejaVu Sans", sans-serif; color: #000; overflow: hidden; }
.page > * { flex: none; }
.phead { height: 82px; position: relative; margin-left: -98px; }
.logo { position: absolute; left: 0; top: 0; overflow: visible; }
.phead h2 { position: relative; padding: 26px 0 0 175px; font-size: 21.33px; line-height: 28px; letter-spacing: .16px; }
.page h3 { font-size: 18.67px; line-height: 24px; color: #0a2463; letter-spacing: .09px; }
.page h4 { font-size: 16px; color: #2a5580; }
.page h4.m8 { letter-spacing: .28px; }
.wide { letter-spacing: .037px; }
.filters { letter-spacing: .018px; }
.page .m1 { margin-top: 12.1px; }
.page .m2 { margin-top: 9.4px; }
.page .m3 { margin-top: 8.4px; }
.page .m4 { margin-top: 10.5px; }
.page .caption { margin-top: 27.5px; font-size: 12px; line-height: 16px; }
.page .m5 { margin-top: 13.5px; }
.page .m6 { margin-top: 8.2px; }
.page .m7 { margin-top: 10.8px; }
.page .m8 { margin-top: 7px; }
.page .m9 { margin-top: 8px; }
.page ol { list-style: none; padding-left: 24px; }
.page ol.flat { padding-left: 0; }
.page li { display: flex; }
.page li span { width: 24px; }
.page u { text-decoration: underline wavy #e0282e 1px; text-underline-offset: 1px; }
.scroll { position: absolute; right: 3px; top: 5px; width: 6px; height: 190px; border-radius: 3px; background: #8a8a8a; }

.deck { position: relative; width: 59px; border-left: 1px solid #b5b5b5; display: flex; flex-direction: column; align-items: center; padding-left: 2px; }
.handle { position: absolute; left: -1px; top: 409px; width: 7px; height: 73px; background: #8c8c8c; }
.tab { width: 36px; height: 42px; display: flex; align-items: center; justify-content: center; }
.tab.menu { height: 40px; }
.tab.sel { height: 34px; margin: 7px 0 4px; background: #d6d6d6; border: 1px solid #c6c6c6; border-radius: 6px; }

.status { height: 21px; flex: none; border-top: 1px solid #b5b5b5; display: grid; grid-template-columns: 31px 260px 363px 308px 278px 68px 29px 29px 217px 76px 143px 1fr; align-items: center; font-size: 11.9px; line-height: 14px; }
.status span { height: 14px; padding-left: 8px; border-right: 1px solid #d8d8d8; }
.status span:last-child { border: 0; }
.status .words { padding-left: 9px; }
.status .ctr { display: flex; align-items: center; justify-content: center; padding: 0; }
.status .save, .status .lang { padding-left: 4px; }
.status .nudge { padding-left: 3px; }
.status .zoom { padding-left: 7px; }
.cursor { position: absolute; left: 1730px; top: 973px; }
```
